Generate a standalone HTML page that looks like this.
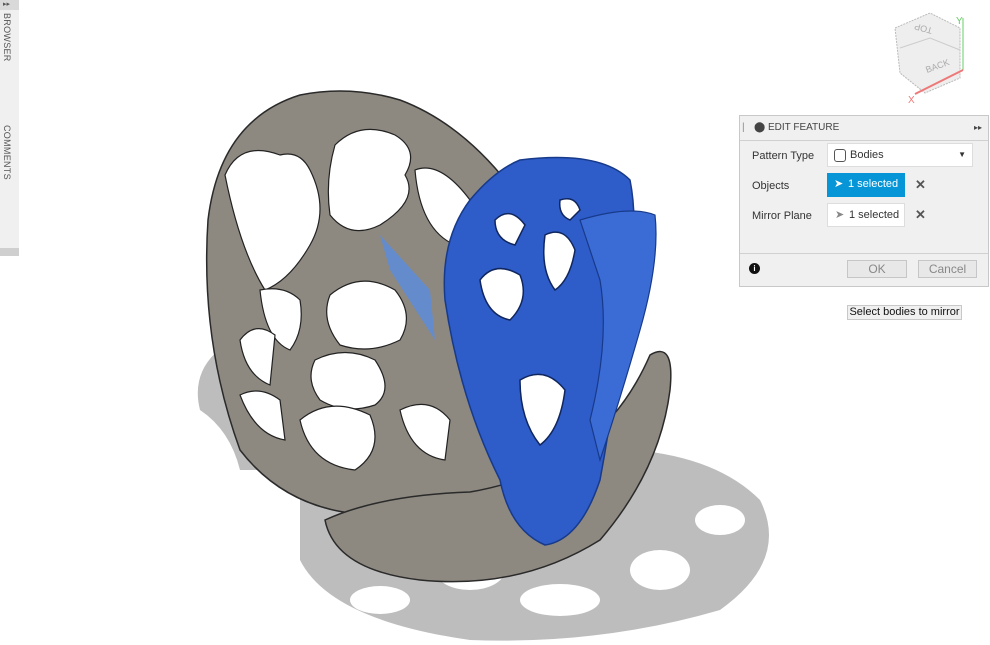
<!DOCTYPE html>
<html><head><meta charset="utf-8"><style>
*{margin:0;padding:0;box-sizing:border-box}
body{width:990px;height:645px;background:#fff;position:relative;overflow:hidden;font-family:"Liberation Sans",sans-serif;font-size:11px;color:#333}
.side{position:absolute;left:0;top:0;width:19px;height:248px;background:#f0f0f0}
.side .hd{height:10px;background:#d9d9d9;font-size:7px;line-height:10px;padding-left:3px;color:#555}
.side .bt{position:absolute;left:0;top:248px;width:19px;height:8px;background:#cfcfcf}
.vt{position:absolute;left:2px;writing-mode:vertical-rl;font-size:9px;color:#555;letter-spacing:0.3px}
.dlg{position:absolute;left:739px;top:115px;width:250px;height:172px;background:#f0f0f0;border:1px solid #c8c8c8}
.dh{height:25px;border-bottom:1px solid #d0d0d0;font-size:10px;line-height:24px;padding-left:14px;color:#444}
.row{position:absolute;left:12px;font-size:11px;color:#333}
.box{position:absolute;left:87px;width:146px;height:24px;background:#fff;border:1px solid #ddd;line-height:22px;padding-left:22px}
.sel{position:absolute;left:87px;width:78px;height:24px;background:#fff;line-height:22px;padding-left:21px}
.x{position:absolute;left:175px;font-size:13px;font-weight:bold;color:#555}
.btn{position:absolute;top:144px;height:18px;background:#e8e8e8;border:1px solid #c6c6c6;text-align:center;line-height:16px;font-size:12px;color:#888}
.tip{position:absolute;left:847px;top:305px;width:115px;height:15px;background:#f0f0f0;border:1px solid #c8c8c8;font-size:11px;line-height:13px;text-align:center;color:#111}
</style></head><body>
<div class="side"><div class="hd">▸▸</div>
<div class="vt" style="top:13px">BROWSER</div>
<div class="vt" style="top:125px">COMMENTS</div>
<div class="bt"></div></div>

<svg width="990" height="645" style="position:absolute;left:0;top:0">
<!-- shadows -->
<g fill="#bdbdbd">
<path d="M225 345 Q190 370 200 410 Q230 430 240 470 L290 470 Q270 420 280 370 Z"/>
<path d="M300 480 Q380 440 560 450 Q700 440 760 500 Q790 560 720 610 Q600 645 470 640 Q330 620 300 560 Z"/>
</g>
<g fill="#fff"><ellipse cx="470" cy="570" rx="35" ry="20"/><ellipse cx="560" cy="600" rx="40" ry="16"/><ellipse cx="660" cy="570" rx="30" ry="20"/><ellipse cx="720" cy="520" rx="25" ry="15"/><ellipse cx="380" cy="600" rx="30" ry="14"/></g>
<!-- grey shell -->
<path d="M300 95 Q220 120 208 220 Q200 340 240 450 Q290 515 380 515 Q470 520 560 500 L600 470 Q570 300 540 230 Q480 130 400 100 Q350 85 300 95 Z" fill="#8d8880" stroke="#2a2a2a" stroke-width="1.5"/>
<path d="M325 520 Q380 495 470 492 Q600 470 650 355 Q675 340 670 390 Q660 470 600 540 Q520 590 420 580 Q335 570 325 520 Z" fill="#8d8880" stroke="#2a2a2a" stroke-width="1.5"/>
<g fill="#fff" stroke="#222" stroke-width="1.2">
<path d="M225 175 Q240 140 280 155 Q300 150 310 170 Q330 210 310 245 Q290 280 265 290 Q240 250 225 175 Z"/>
<path d="M335 145 Q360 120 395 135 Q420 150 405 175 Q420 200 380 225 Q350 240 330 215 Q325 180 335 145 Z"/>
<path d="M415 170 Q440 160 470 200 Q480 230 455 245 Q420 230 415 170 Z"/>
<path d="M330 295 Q360 270 395 290 Q415 315 400 340 Q370 355 340 345 Q320 320 330 295 Z"/>
<path d="M260 290 Q285 285 300 300 Q305 330 290 350 Q265 340 260 290 Z"/>
<path d="M315 360 Q345 345 375 360 Q395 390 375 405 Q345 415 320 400 Q305 380 315 360 Z"/>
<path d="M240 340 Q255 320 275 335 L270 385 Q245 375 240 340 Z"/>
<path d="M300 420 Q330 395 370 415 Q385 450 355 470 Q310 465 300 420 Z"/>
<path d="M240 395 Q260 385 280 400 L285 440 Q255 435 240 395 Z"/>
<path d="M400 410 Q430 395 450 420 L445 460 Q410 455 400 410 Z"/>
</g>
<path d="M380 235 L430 290 L435 340 L390 270 Z" fill="#5a8de0" opacity="0.8"/>
<!-- blue body -->
<path d="M520 160 Q600 150 630 180 Q640 230 625 300 Q615 400 600 480 Q580 540 545 545 Q510 530 500 480 Q460 400 445 300 Q440 240 470 200 Q495 170 520 160 Z" fill="#2e5cc8" stroke="#173a8a" stroke-width="1.5"/>
<path d="M580 220 Q630 205 655 215 Q660 260 640 330 Q620 400 600 460 L590 420 Q610 340 600 280 Z" fill="#3b6cd6" stroke="#173a8a" stroke-width="1.2"/>
<g fill="#fff" stroke="#10265e" stroke-width="1.5">
<path d="M480 280 Q495 260 520 275 Q530 300 510 320 Q485 315 480 280 Z"/>
<path d="M495 220 Q510 205 525 225 L515 245 Q495 240 495 220 Z"/>
<path d="M545 235 Q565 225 575 250 Q570 280 555 290 Q540 270 545 235 Z"/>
<path d="M520 380 Q545 365 565 390 Q560 430 540 445 Q520 420 520 380 Z"/>
<path d="M560 200 Q575 195 580 210 L570 220 Q558 215 560 200 Z"/>
</g>
</svg>

<!-- viewcube -->
<svg width="100" height="100" style="position:absolute;left:885px;top:8px">
<path d="M10 20 L45 5 L75 20 L75 70 L40 85 L15 65 Z" fill="#eee" stroke="#bbb" stroke-dasharray="2,1"/>
<path d="M15 40 L45 30 L75 42" fill="none" stroke="#ccc"/>
<text x="48" y="20" font-size="9" fill="#aaa" transform="rotate(195 48 20)" font-family="Liberation Sans">TOP</text>
<text x="42" y="65" font-size="9" fill="#aaa" transform="rotate(-20 42 65)" font-family="Liberation Sans">BACK</text>
<line x1="78" y1="10" x2="78" y2="62" stroke="#6c6"/>
<line x1="78" y1="62" x2="30" y2="86" stroke="#e77" stroke-width="2"/>
<text x="71" y="16" font-size="10" fill="#6c6">Y</text>
<text x="23" y="95" font-size="10" fill="#e77">X</text>
</svg>

<div class="dlg">
<div class="dh"><span style="position:absolute;left:2px;top:0;color:#888">|</span>⬤&nbsp;EDIT FEATURE<span style="position:absolute;right:6px;font-size:8px">▸▸</span></div>
<div class="row" style="top:34px">Pattern Type</div>
<div class="box" style="top:27px">Bodies<span style="position:absolute;left:6px;top:5px;width:12px;height:13px;border:1px solid #555;border-radius:3px"></span><span style="position:absolute;right:6px;font-size:8px">▼</span></div>
<div class="row" style="top:64px">Objects</div>
<div class="sel" style="top:57px;background:#0696d7;color:#fff">1 selected<span style="position:absolute;left:7px">➤</span></div>
<div class="x" style="top:61px">✕</div>
<div class="row" style="top:94px">Mirror Plane</div>
<div class="sel" style="top:87px;border:1px solid #ddd">1 selected<span style="position:absolute;left:7px;color:#888">➤</span></div>
<div class="x" style="top:91px">✕</div>
<div style="position:absolute;left:0;top:137px;width:248px;border-top:1px solid #d0d0d0"></div>
<div style="position:absolute;left:9px;top:147px;width:11px;height:11px;border-radius:50%;background:#111;color:#fff;font-size:8px;font-weight:bold;text-align:center;line-height:11px">i</div>
<div class="btn" style="left:107px;width:60px">OK</div>
<div class="btn" style="left:178px;width:59px">Cancel</div>
</div>
<div class="tip">Select bodies to mirror</div>
</body></html>
